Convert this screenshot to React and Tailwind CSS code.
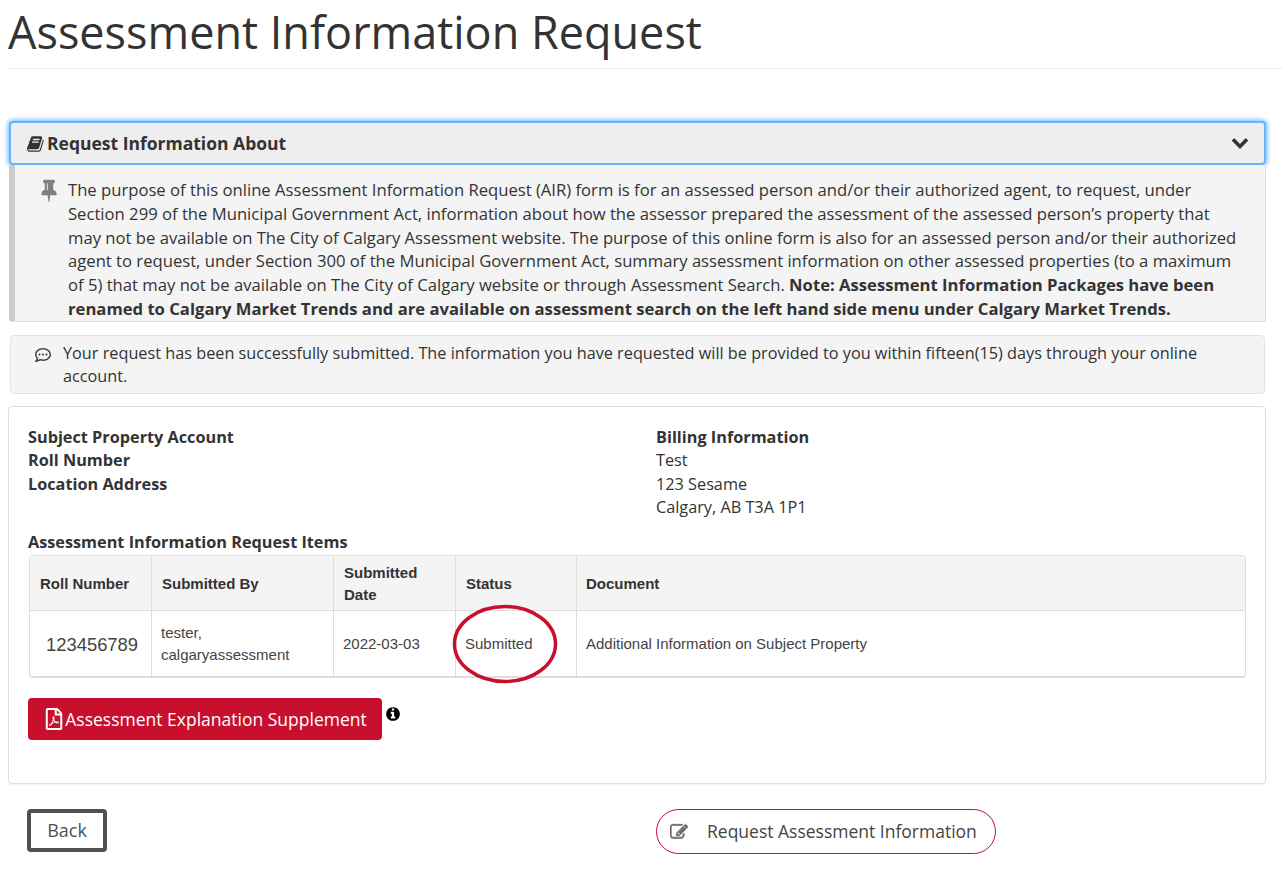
import React from 'react'
import { FaRegCommentDots, FaRegFilePdf } from 'react-icons/fa'

// font awesome 4 glyphs, the package only has the newer shapes
function Fa4({ d, className }) {
  return (
    <svg viewBox="0 0 1792 1792" fill="currentColor" className={className}>
      <path d={d} />
    </svg>
  )
}

const bookPath = 'M1639 478q40 57 18 129l-275 906q-19 64-76.5 107.5t-122.5 43.5h-923q-77 0-148.5-53.5t-99.5-131.5q-24-67-2-127 0-4 3-27t4-37q1-8-3-21.5t-3-19.5q2-11 8-21t16.5-23.5 16.5-23.5q23-38 45-91.5t30-91.5q3-10 .5-30t-.5-28q3-11 17-28t17-23q21-36 42-92t25-90q1-9-2.5-32t.5-28q4-13 22-30.5t22-22.5q19-26 42.5-84.5t27.5-96.5q1-8-3-25.5t-2-26.5q2-8 9-18t18-23 17-21q8-12 16.5-30.5t15-35 16-36 19.5-32 26.5-23.5 36-11.5 47.5 5.5l-1 3q38-9 51-9h761q74 0 114 56t18 130l-274 906q-36 119-71.5 153.5t-128.5 34.5h-869q-27 0-38 15-11 16-1 43 24 70 144 70h923q29 0 56-15.5t35-41.5l300-987q7-22 5-57 38 15 59 43zm-1064 2q-4 13 2 22.5t20 9.5h608q13 0 25.5-9.5t16.5-22.5l21-64q4-13-2-22.5t-20-9.5h-608q-13 0-25.5 9.5t-16.5 22.5zm-83 256q-4 13 2 22.5t20 9.5h608q13 0 25.5-9.5t16.5-22.5l21-64q4-13-2-22.5t-20-9.5h-608q-13 0-25.5 9.5t-16.5 22.5z'
const chevronPath = 'M1683 808l-742 741q-19 19-45 19t-45-19l-742-741q-19-19-19-45.5t19-45.5l166-165q19-19 45-19t45 19l531 531 531-531q19-19 45-19t45 19l166 165q19 19 19 45.5t-19 45.5z'
const pinPath = 'M800 864v-448q0-14-9-23t-23-9-23 9-9 23v448q0 14 9 23t23 9 23-9 9-23zm672 352q0 26-19 45t-45 19h-429l-51 483q-2 12-10.5 20.5t-20.5 8.5h-1q-27 0-32-27l-76-485h-404q-26 0-45-19t-19-45q0-123 78.5-221.5t177.5-98.5v-512q-52 0-90-38t-38-90 38-90 90-38h640q52 0 90 38t38 90-38 90-90 38v512q99 0 177.5 98.5t78.5 221.5z'
const infoPath = 'M1152 1376v-160q0-14-9-23t-23-9h-96v-512q0-14-9-23t-23-9h-320q-14 0-23 9t-9 23v160q0 14 9 23t23 9h96v320h-96q-14 0-23 9t-9 23v160q0 14 9 23t23 9h448q14 0 23-9t9-23zm-128-896v-160q0-14-9-23t-23-9h-192q-14 0-23 9t-9 23v160q0 14 9 23t23 9h192q14 0 23-9t9-23zm640 416q0 209-103 385.5t-279.5 279.5-385.5 103-385.5-103-279.5-279.5-103-385.5 103-385.5 279.5-279.5 385.5-103 385.5 103 279.5 279.5 103 385.5z'
const editPath = 'M888 1184l116-116-152-152-116 116v56h96v96h56zm440-720q-16-16-33 1l-350 350q-17 17-1 33t33-1l350-350q17-17 1-33zm80 594v190q0 119-84.5 203.5t-203.5 84.5h-832q-119 0-203.5-84.5t-84.5-203.5v-832q0-119 84.5-203.5t203.5-84.5h832q63 0 117 25 15 7 18 23 3 17-9 29l-49 49q-14 14-32 8-23-6-45-6h-832q-66 0-113 47t-47 113v832q0 66 47 113t113 47h832q66 0 113-47t47-113v-126q0-13 9-22l64-64q15-15 35-7t20 29zm-96-738l288 288-672 672h-288v-288zm444 132l-92 92-288-288 92-92q28-28 68-28t68 28l152 152q28 28 28 68t-28 68z'

function App() {
  return (
    <div className="w-[1283px] h-[890px] overflow-hidden bg-white text-[#333] text-[16.25px] leading-[23.6px] font-['Open_Sans',sans-serif]">
      <div className="ml-2 h-[69px] border-b border-[#eee]">
        <h1 className="text-[45px] leading-[64px] font-normal">Assessment Information Request</h1>
      </div>

      {/* accordion */}
      <div className="mt-[52px] ml-[9px] w-[1257px] h-[44px] flex items-center justify-between pl-[16px] pr-[15px] bg-[#eee] border-2 border-[#66b5ff] rounded-[4px] shadow-[0_0_5px_1px_#66b5ff]">
        <div className="flex items-center gap-[2px] pt-[1px] text-[17.5px] font-bold">
          <Fa4 d={bookPath} className="w-[18px] h-[18px]" />
          <span>Request Information About</span>
        </div>
        <Fa4 d={chevronPath} className="w-[18px] h-[18px] -mt-[3px]" />
      </div>
      <div className="relative ml-[9px] w-[1257px] h-[157px] bg-[#f4f4f4] border-r border-b border-[#ddd] border-l-[6px] border-l-[#ccc] rounded-b-[3px] overflow-hidden pl-[53px] pr-[20px] pt-[13px]">
        <Fa4 d={pinPath} className="absolute left-[22px] top-[13px] w-[24px] h-[24px] text-[#808080]" />
        <p className="text-[16.65px] leading-[23.8px]">
          The purpose of this online Assessment Information Request (AIR) form is for an assessed person and/or their authorized agent, to request, under Section 299 of the Municipal Government Act, information about how the assessor prepared the assessment of the assessed person’s property that may not be available on The City of Calgary Assessment website. The purpose of this online form is also for an assessed person and/or their authorized agent to request, under Section 300 of the Municipal Government Act, summary assessment information on other assessed properties (to a maximum of 5) that may not be available on The City of Calgary website or through Assessment Search. <b className="font-bold">Note: Assessment Information Packages have been renamed to Calgary Market Trends and are available on assessment search on the left hand side menu under Calgary Market Trends.</b>
        </p>
      </div>

      {/* message */}
      <div className="mt-[13px] ml-[10px] w-[1255px] h-[59px] flex bg-[#f4f4f4] border border-[#e3e3e3] rounded-[4px] pl-[24px] pr-[40px] pt-[6px]">
        <FaRegCommentDots className="mt-[5px] shrink-0 text-base text-[#444]" />
        <p className="ml-[12px] leading-[23px]">Your request has been successfully submitted. The information you have requested will be provided to you within fifteen(15) days through your online account.</p>
      </div>

      {/* card */}
      <div className="mt-3 ml-2 w-[1258px] h-[378px] border border-[#ddd] rounded-[4px] pl-[19px] pr-[19px] pt-[18.5px] shadow-[0_1px_1px_rgba(0,0,0,0.05)]">
        <div className="flex">
          <div className="w-[628px] font-bold">
            <div>Subject Property Account</div>
            <div>Roll Number</div>
            <div>Location Address</div>
          </div>
          <div>
            <div className="font-bold">Billing Information</div>
            <div>Test</div>
            <div>123 Sesame</div>
            <div>Calgary, AB T3A 1P1</div>
          </div>
        </div>

        <div className="mt-[11px] font-bold">Assessment Information Request Items</div>

        <div className="relative ml-[1px] w-[1217px] h-[123px] mt-[1px] border border-[#ddd] border-b-2 rounded-[4px] font-['Liberation_Sans',sans-serif] text-[15px] leading-[22px]">
          <div className="flex h-[55px] bg-[#f4f4f4] border-b border-[#ddd] pt-[1px] font-bold text-[#333]">
            <div className="w-[122px] flex items-center pl-[10px] border-r border-[#ddd]">Roll Number</div>
            <div className="w-[182px] flex items-center pl-[10px] border-r border-[#ddd]">Submitted By</div>
            <div className="w-[122px] flex items-center pl-[10px] border-r border-[#ddd]">Submitted<br />Date</div>
            <div className="w-[121px] flex items-center pl-[10px] border-r border-[#ddd]">Status</div>
            <div className="flex-1 flex items-center pl-[9px]">Document</div>
          </div>
          <div className="flex h-[65px] text-[#444]">
            <div className="w-[122px] flex items-center pl-[16px] pt-[3px] border-r border-[#ddd] text-[18.4px]">123456789</div>
            <div className="w-[182px] flex items-center pl-[9px] pt-[1px] border-r border-[#ddd]">tester,<br />calgaryassessment</div>
            <div className="w-[122px] flex items-center pl-[9px] pt-[1px] border-r border-[#ddd]">2022-03-03</div>
            <div className="w-[121px] flex items-center pl-[9px] pt-[1px] border-r border-[#ddd]">Submitted</div>
            <div className="flex-1 flex items-center pl-[9px] pt-[1px]">Additional Information on Subject Property</div>
          </div>
          <svg className="absolute left-[422px] top-[48px]" width="106" height="80" viewBox="0 0 106 80">
            <ellipse cx="53" cy="40" rx="50.5" ry="37.5" fill="none" stroke="#c8102e" strokeWidth="3.5" />
          </svg>
        </div>

        <div className="mt-[20px] flex items-start">
          <button type="button" className="w-[354px] h-[42px] flex items-center justify-center bg-[#c8102e] text-white text-[17.5px] rounded-[4px]">
            <FaRegFilePdf className="text-[22px]" />
            <span>Assessment Explanation Supplement</span>
          </button>
          <Fa4 d={infoPath} className="ml-[3px] mt-[8px] w-[16px] h-[16px] text-black" />
        </div>
      </div>

      {/* bottom buttons */}
      <div className="mt-[25px] flex items-start">
        <button type="button" className="ml-[27px] w-[80px] h-[43px] pb-[2px] border-[4px] border-[#4d5156] rounded-[4px] text-lg text-[#4d5156]">Back</button>
        <button type="button" className="ml-[549px] w-[340px] h-[45px] flex items-center border border-[#c8102e] rounded-full pl-[13px] text-[17.5px] text-[#444]">
          <Fa4 d={editPath} className="w-[18px] h-[18px] text-[#666] stroke-[#666] stroke-[60px]" />
          <span className="ml-[19px]">Request Assessment Information</span>
        </button>
      </div>
    </div>
  )
}

export default App
